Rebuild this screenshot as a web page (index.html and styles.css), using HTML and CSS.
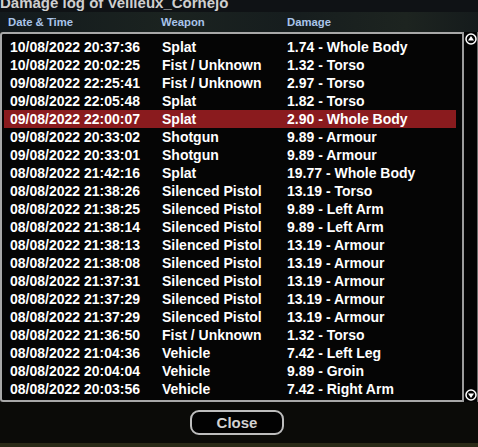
FILE: index.html
```html
<!DOCTYPE html>
<html lang="en">
<head>
    <meta charset="UTF-8">
    <title>Damage log</title>
    <link rel="stylesheet" href="styles.css">
</head>
<body>
    <div class="window">
        <div class="title"><span>Damage log of Veilleux_Cornejo</span></div>
        <div class="heads">
            <span>Date &amp; Time</span>
            <span>Weapon</span>
            <span>Damage</span>
        </div>
        <div class="panel">
            <div class="list">
                <div class="row"><span>10/08/2022 20:37:36</span><span>Splat</span><span>1.74 - Whole Body</span></div>
                <div class="row"><span>10/08/2022 20:02:25</span><span>Fist / Unknown</span><span>1.32 - Torso</span></div>
                <div class="row"><span>09/08/2022 22:25:41</span><span>Fist / Unknown</span><span>2.97 - Torso</span></div>
                <div class="row"><span>09/08/2022 22:05:48</span><span>Splat</span><span>1.82 - Torso</span></div>
                <div class="row selected"><span>09/08/2022 22:00:07</span><span>Splat</span><span>2.90 - Whole Body</span></div>
                <div class="row"><span>09/08/2022 20:33:02</span><span>Shotgun</span><span>9.89 - Armour</span></div>
                <div class="row"><span>09/08/2022 20:33:01</span><span>Shotgun</span><span>9.89 - Armour</span></div>
                <div class="row"><span>08/08/2022 21:42:16</span><span>Splat</span><span>19.77 - Whole Body</span></div>
                <div class="row"><span>08/08/2022 21:38:26</span><span>Silenced Pistol</span><span>13.19 - Torso</span></div>
                <div class="row"><span>08/08/2022 21:38:25</span><span>Silenced Pistol</span><span>9.89 - Left Arm</span></div>
                <div class="row"><span>08/08/2022 21:38:14</span><span>Silenced Pistol</span><span>9.89 - Left Arm</span></div>
                <div class="row"><span>08/08/2022 21:38:13</span><span>Silenced Pistol</span><span>13.19 - Armour</span></div>
                <div class="row"><span>08/08/2022 21:38:08</span><span>Silenced Pistol</span><span>13.19 - Armour</span></div>
                <div class="row"><span>08/08/2022 21:37:31</span><span>Silenced Pistol</span><span>13.19 - Armour</span></div>
                <div class="row"><span>08/08/2022 21:37:29</span><span>Silenced Pistol</span><span>13.19 - Armour</span></div>
                <div class="row"><span>08/08/2022 21:37:29</span><span>Silenced Pistol</span><span>13.19 - Armour</span></div>
                <div class="row"><span>08/08/2022 21:36:50</span><span>Fist / Unknown</span><span>1.32 - Torso</span></div>
                <div class="row"><span>08/08/2022 21:04:36</span><span>Vehicle</span><span>7.42 - Left Leg</span></div>
                <div class="row"><span>08/08/2022 20:04:04</span><span>Vehicle</span><span>9.89 - Groin</span></div>
                <div class="row"><span>08/08/2022 20:03:56</span><span>Vehicle</span><span>7.42 - Right Arm</span></div>
            </div>
            <div class="scroll">
                <svg class="arrow" width="12" height="12" viewBox="0 0 12 12">
                    <circle cx="6" cy="6" r="5" fill="none" stroke="#fff" stroke-width="1.5"/>
                    <path d="M6 3 L9 7.5 L3 7.5 Z" fill="#fff"/>
                </svg>
                <svg class="arrow" width="12" height="12" viewBox="0 0 12 12">
                    <circle cx="6" cy="6" r="5" fill="none" stroke="#fff" stroke-width="1.5"/>
                    <path d="M3 4.5 L9 4.5 L6 9 Z" fill="#fff"/>
                </svg>
            </div>
        </div>
        <div class="footer">
            <button class="close">Close</button>
        </div>
        <div class="ground"></div>
    </div>
</body>
</html>
```

FILE: styles.css
```css
body {
    margin: 0;
    background-color: #0b0b08;
    font-family: "Liberation Sans", Arial, sans-serif;
    font-weight: bold;
}
.window {
    width: 478px;
    height: 447px;
    display: flex;
    flex-direction: column;
    overflow: hidden;
}
/* window caption, its upper half sits above the visible area */
.title {
    height: 12px;
    overflow: hidden;
    background-color: #0f1215;
    color: #cfcfcf;
    font-size: 15px;
    line-height: 12px;
}
.title span {
    display: block;
    margin-top: -3px;
}
.heads {
    height: 20px;
    display: grid;
    grid-template-columns: 153px 126px 1fr;
    align-items: center;
    padding-left: 8px;
    background: linear-gradient(90deg, #131a1d 0%, #1b2320 35%, #161d1e 60%, #1d2420 85%, #151b1c 100%);
    color: #a9c4ea;
    font-size: 11.3px;
}
.panel {
    height: 370px;
    display: flex;
}
.list {
    flex: 1;
    background-color: #050505;
    border: 2px solid #a8a8a8;
    border-right: none;
    border-radius: 3px 0 0 3px;
    padding: 4px 6px 0 2px;
}
.row {
    height: 18px;
    display: grid;
    grid-template-columns: 152px 125px 1fr;
    align-items: center;
    padding-left: 6px;
    color: #fff;
    font-size: 14px;
    white-space: nowrap;
}
.row.selected {
    background-color: #8a1b1e;
}
.scroll {
    width: 13px;
    background-color: #030303;
    border-left: 2px solid #9c9c9c;
    border-right: 1px solid #6a6a6a;
    display: flex;
    flex-direction: column;
    justify-content: space-between;
    align-items: center;
    padding: 1px 0;
}
.arrow {
    display: block;
}
.footer {
    height: 41px;
    display: flex;
    justify-content: center;
    align-items: center;
    padding-right: 4px;
}
.close {
    width: 94px;
    height: 25px;
    background-color: #020202;
    border: 2px solid #bdbdbd;
    border-radius: 9px;
    color: #d2d2d2;
    font-family: "Liberation Sans", Arial, sans-serif;
    font-weight: bold;
    font-size: 15px;
    padding: 0;
}
.ground {
    flex: 1;
    background-color: #2a2a17;
}
```
